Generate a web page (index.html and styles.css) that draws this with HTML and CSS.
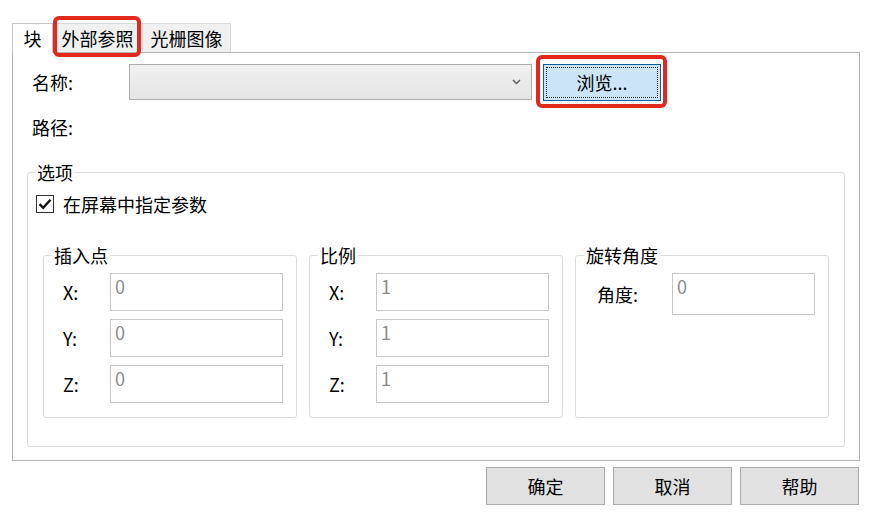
FILE: index.html
```html
<!DOCTYPE html>
<html lang="zh-CN">

<head>
  <meta charset="UTF-8" />
  <title>附着</title>
  <link rel="stylesheet" href="styles.css">
</head>

<body>
  <div class="dialog">
    <div class="tabs">
      <span class="tab active">块</span>
      <span class="tab xref mark">外部参照</span>
      <span class="tab raster">光栅图像</span>
    </div>

    <div class="panel">
      <div class="name-row">
        <span class="label">名称:</span>
        <div class="combo">
          <svg class="chevron" width="9" height="6" viewBox="0 0 9 6">
            <path d="M1 1 L4.5 4.5 L8 1" fill="none" stroke="#5a5a5a" stroke-width="1.4" />
          </svg>
        </div>
        <span class="browse-wrap mark">
          <button class="browse"><span class="focus">浏览...</span></button>
        </span>
      </div>

      <div class="path-row">路径:</div>

      <fieldset class="options">
        <legend>选项</legend>
        <label class="check-row">
          <span class="checkbox">
            <svg width="14" height="12" viewBox="0 0 14 12">
              <path d="M1.5 6.2 L5.2 9.8 L12.5 1.8" fill="none" stroke="#111" stroke-width="2.4" />
            </svg>
          </span>
          在屏幕中指定参数
        </label>

        <div class="groups">
          <fieldset class="group">
            <legend>插入点</legend>
            <div class="fields">
              <span>X:</span><div class="field">0</div>
              <span>Y:</span><div class="field">0</div>
              <span>Z:</span><div class="field">0</div>
            </div>
          </fieldset>
          <fieldset class="group">
            <legend>比例</legend>
            <div class="fields">
              <span>X:</span><div class="field">1</div>
              <span>Y:</span><div class="field">1</div>
              <span>Z:</span><div class="field">1</div>
            </div>
          </fieldset>
          <fieldset class="group rotate">
            <legend>旋转角度</legend>
            <div class="fields angle">
              <span>角度:</span><div class="field">0</div>
            </div>
          </fieldset>
        </div>
      </fieldset>
    </div>

    <div class="buttons">
      <button class="btn">确定</button>
      <button class="btn">取消</button>
      <button class="btn">帮助</button>
    </div>
  </div>
</body>

</html>
```

FILE: styles.css
```css
* {
  box-sizing: border-box;
}

body {
  margin: 0;
  background-color: #fff;
  color: #000;
  font-family: "Noto Sans CJK SC", "Microsoft YaHei", sans-serif;
  font-size: 18px;
  line-height: 24px;
}

.dialog {
  width: 848px;
  margin-left: 12px;
  padding-top: 23px;
}

/* 标签页 */
.tabs {
  display: flex;
  align-items: flex-end;
  height: 29px;
}

.tab {
  position: relative;
  width: 87px;
  height: 29px;
  padding-top: 2px;
  background-color: #f0f0f0;
  border: 1px solid #d9d9d9;
  border-bottom: none;
  text-align: center;
  line-height: 24px;
}

.tab.active {
  width: 41px;
  height: 30px;
  margin-bottom: -1px;
  background-color: #fff;
  border-color: #c4c4c4;
  z-index: 1;
}

.tab.xref {
  margin-left: 1px;
}

.tab.raster {
  width: 89px;
  margin-left: 1px;
}

.mark::after {
  content: "";
  position: absolute;
  border: 4px solid #e2281f;
  border-radius: 6px;
  pointer-events: none;
}

.tab.mark::after {
  top: -8px;
  bottom: -5px;
  left: -2px;
  right: -1px;
}

.panel {
  height: 409px;
  padding: 11px 0 0;
  border: 1px solid #b4b4b4;
}

.name-row {
  display: flex;
  align-items: flex-start;
  padding-left: 19px;
}

.name-row .label {
  width: 97px;
  line-height: 36px;
}

.combo {
  position: relative;
  width: 403px;
  height: 36px;
  margin-right: 11px;
  border: 1px solid #adadad;
  background: linear-gradient(#f0f0f0, #e5e5e5);
}

.chevron {
  position: absolute;
  right: 10px;
  top: 14px;
}

.browse-wrap {
  position: relative;
  display: block;
}

.browse-wrap.mark::after {
  top: -9px;
  bottom: -7px;
  left: -7px;
  right: -6px;
}

.browse {
  display: block;
  width: 118px;
  height: 37px;
  padding: 2px;
  border: 1px solid #0a5aa0;
  background-color: #cce4f7;
  font: inherit;
  color: #000;
}

.browse .focus {
  display: block;
  height: 100%;
  border: 1px dotted #222;
  line-height: 29px;
}

.path-row {
  margin-top: 14px;
  padding-left: 19px;
}

/* 分组框 */
fieldset {
  margin: 0;
  min-width: 0;
  border: 1px solid #dcdcdc;
  border-radius: 3px;
}

legend {
  padding: 0 2px;
  line-height: 24px;
}

.options {
  margin: 21px 14px 0;
  padding: 8px 0 28px 8px;
}

.options > legend {
  margin-left: -1px;
}

.check-row {
  display: flex;
  align-items: center;
  gap: 9px;
}

.checkbox {
  width: 18px;
  height: 18px;
  border: 1px solid #333;
  display: flex;
  justify-content: center;
  align-items: center;
}

.groups {
  display: flex;
  gap: 12px;
  margin-top: 27px;
  padding-left: 7px;
}

.group {
  flex: none;
  width: 254px;
  padding: 6px 13px 14px 19px;
}

.group > legend {
  margin-left: -11px;
}

.group.rotate {
  padding-left: 21px;
}

.group.rotate > legend {
  margin-left: -13px;
}

.fields {
  display: grid;
  grid-template-columns: 47px 173px;
  grid-auto-rows: 38px;
  row-gap: 8px;
  align-items: center;
}

.fields.angle {
  grid-template-columns: 75px 143px;
  grid-auto-rows: 42px;
}

.field {
  height: 100%;
  padding: 1px 4px;
  border: 1px solid #c8c8c8;
  color: #8c8c8c;
  line-height: 22px;
}

/* 底部按钮 */
.buttons {
  display: flex;
  justify-content: flex-end;
  gap: 8px;
  margin-top: 6px;
  padding-right: 1px;
}

.btn {
  width: 119px;
  height: 38px;
  border: 1px solid #adadad;
  background-color: #e1e1e1;
  font: inherit;
  color: #000;
}
```
